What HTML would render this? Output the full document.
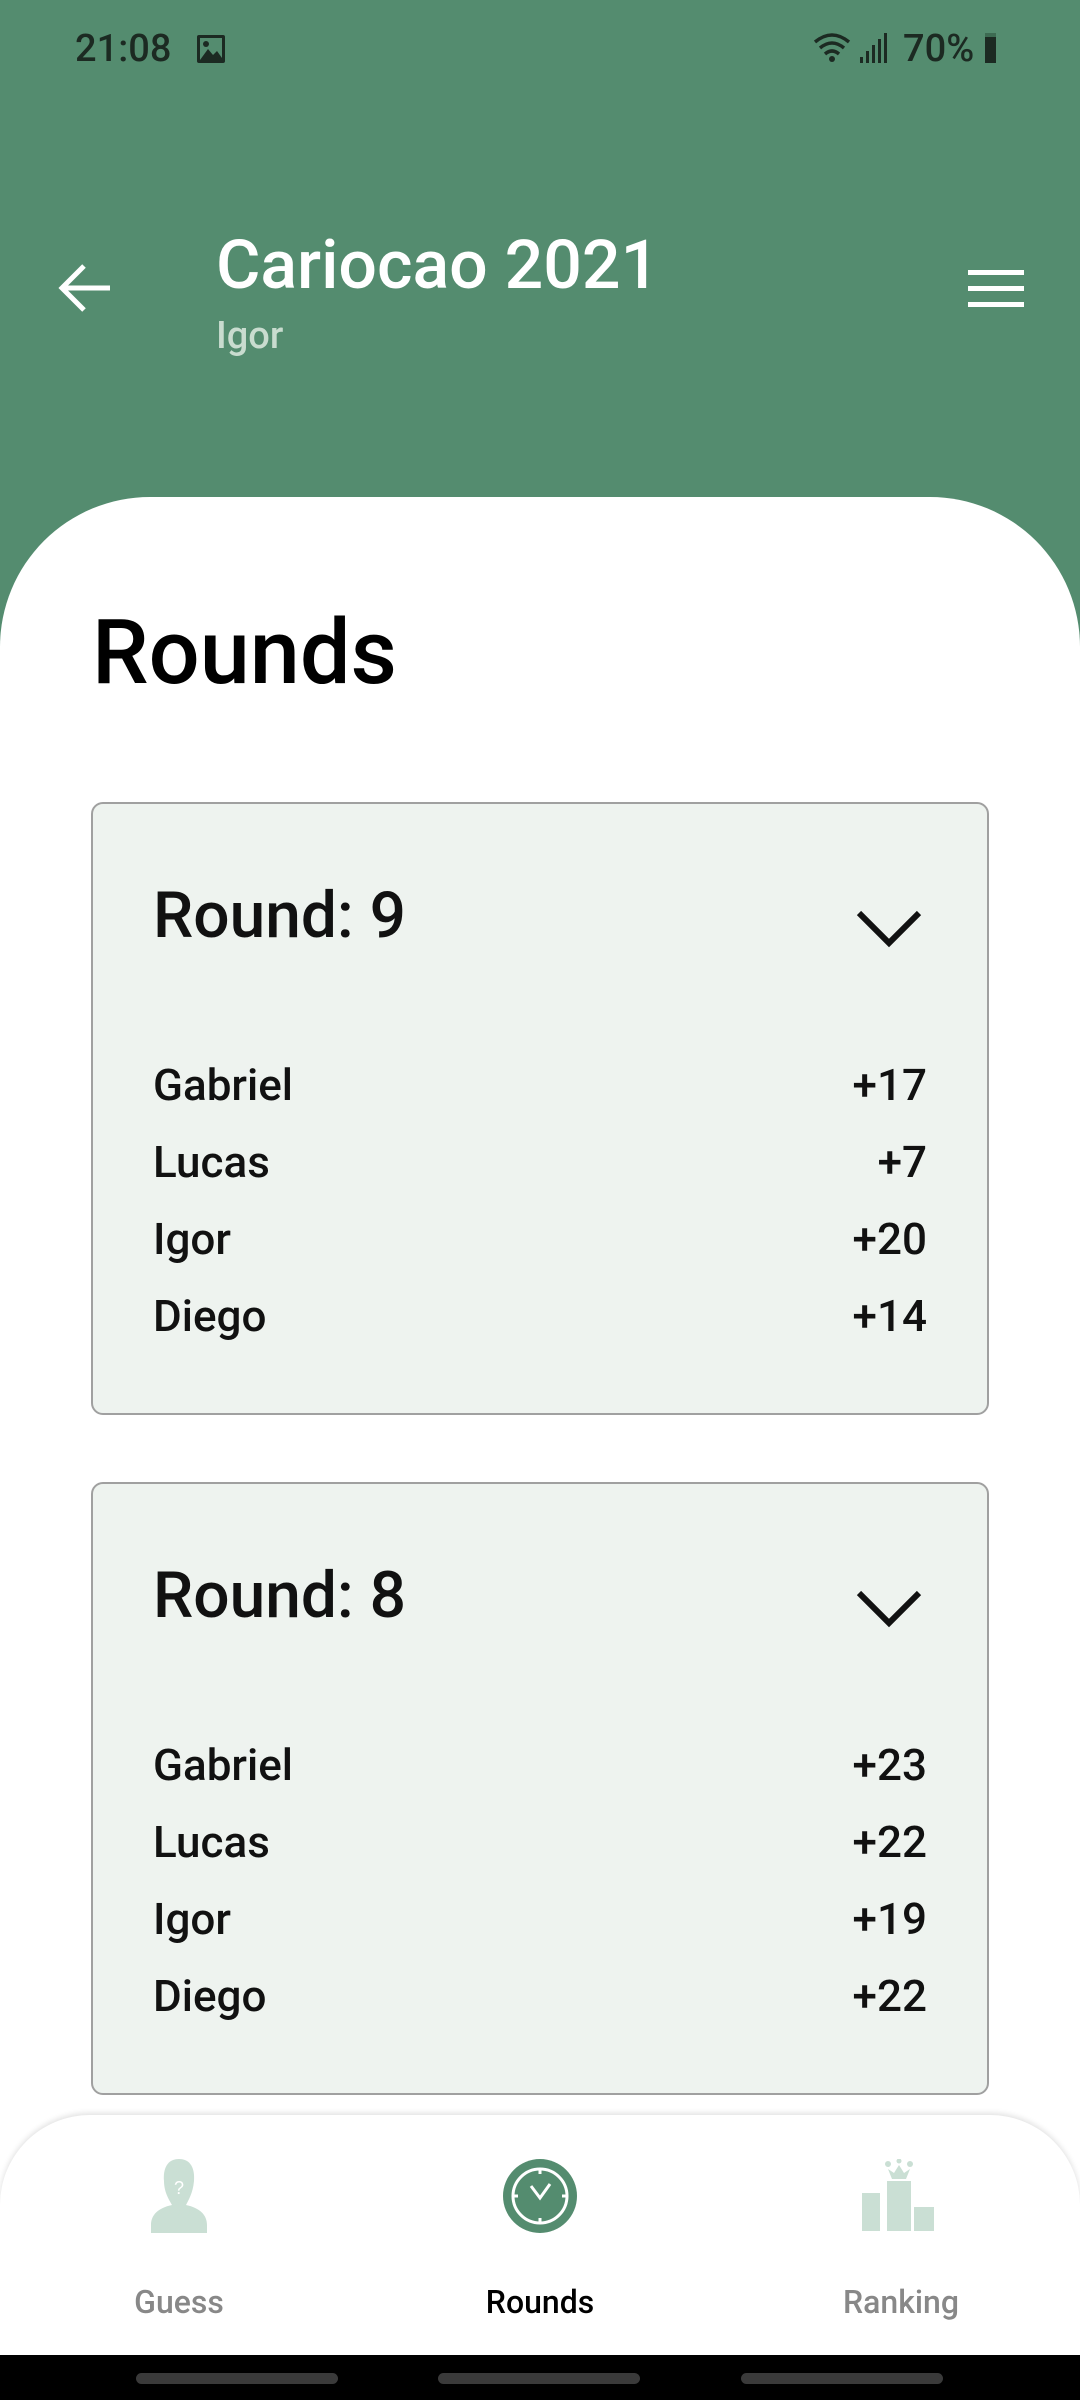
<!DOCTYPE html>
<html><head><meta charset="utf-8"><style>
*{margin:0;padding:0;box-sizing:border-box}
body{width:1080px;height:2400px;position:relative;overflow:hidden;background:#548c6f;font-family:"Roboto","Liberation Sans",sans-serif}
.a{position:absolute;line-height:1;white-space:nowrap}
.sheet{position:absolute;left:0;top:497px;width:1080px;height:1903px;background:#fff;border-radius:150px 150px 0 0}
.card{position:absolute;left:91px;width:898px;height:613px;background:#eef3ef;border:2px solid #a0a0a0;border-radius:12px}
.row{position:absolute;left:60px;right:60px;font-size:44px;font-weight:500;line-height:1;color:#111;display:flex;justify-content:space-between}
.nav{position:absolute;left:0;top:2115px;width:1080px;height:240px;background:#fff;border-radius:90px 90px 0 0;box-shadow:0 -2px 6px rgba(0,0,0,.12)}
.pill{position:absolute;top:2373px;height:11px;width:202px;border-radius:6px;background:#3a3a3a}
</style></head><body>
<div class="a" style="left:75px;top:30px;font-size:38px;font-weight:500;color:#1c2a22">21:08</div>
<svg class="a" style="left:196px;top:34px" width="30" height="30" viewBox="0 0 30 30"><rect x="1" y="1" width="28" height="28" rx="2" fill="#1c2a22"/><rect x="4" y="4" width="22" height="22" fill="#548c6f"/><path d="M4 26 L12 15 L17 21 L21 17 L26 24 V26Z" fill="#1c2a22"/><circle cx="10" cy="10" r="3" fill="#1c2a22"/></svg>
<svg class="a" style="left:812px;top:30px" width="80" height="36" viewBox="0 0 80 36"><path d="M3 12 Q20 -2 37 12" stroke="#1c2a22" stroke-width="3.5" fill="none"/><path d="M8 18 Q20 8 32 18" stroke="#1c2a22" stroke-width="3.5" fill="none"/><path d="M13 24 Q20 18 27 24" stroke="#1c2a22" stroke-width="3.5" fill="none"/><circle cx="20" cy="29" r="3" fill="#1c2a22"/><rect x="48" y="27" width="3" height="6" fill="#1c2a22"/><rect x="54" y="21" width="3" height="12" fill="#1c2a22"/><rect x="60" y="15" width="3" height="18" fill="#1c2a22"/><rect x="66" y="9" width="3" height="24" fill="#1c2a22"/><rect x="72" y="3" width="3" height="30" fill="#1c2a22"/></svg>
<div class="a" style="left:903px;top:30px;font-size:38px;font-weight:500;color:#1c2a22">70%</div>
<div class="a" style="left:985px;top:33px;width:11px;height:30px;background:#1c2a22;border-top:4px solid #3d6b52"></div>
<svg class="a" style="left:58px;top:263px" width="54" height="50" viewBox="0 0 54 50"><path d="M4 25 H52 M26 3 L4 25 L26 47" stroke="#fff" stroke-width="5" fill="none"/></svg>
<div class="a" style="left:216px;top:231px;font-size:68px;font-weight:500;color:#fff">Cariocao 2021</div>
<div class="a" style="left:216px;top:317px;font-size:38px;font-weight:500;color:#c9dccf">Igor</div>
<div class="a" style="left:968px;top:270px;width:56px;height:5px;background:#fff"></div>
<div class="a" style="left:968px;top:286px;width:56px;height:5px;background:#fff"></div>
<div class="a" style="left:968px;top:302px;width:56px;height:5px;background:#fff"></div>
<div class="sheet"></div>
<div class="a" style="left:92px;top:608px;font-size:90px;font-weight:500;color:#000">Rounds</div>

<div class="card" style="top:802px">
<div class="a" style="left:60px;top:80px;font-size:64px;font-weight:500;color:#111">Round: 9</div>
<svg class="a" style="left:763px;top:105px" width="66" height="40" viewBox="0 0 66 40"><path d="M3 4 L33 34 L63 4" stroke="#111" stroke-width="6" fill="none"/></svg>
<div class="row" style="top:259px"><span>Gabriel</span><span>+17</span></div>
<div class="row" style="top:336px"><span>Lucas</span><span>+7</span></div>
<div class="row" style="top:413px"><span>Igor</span><span>+20</span></div>
<div class="row" style="top:490px"><span>Diego</span><span>+14</span></div>
</div>
<div class="card" style="top:1482px">
<div class="a" style="left:60px;top:80px;font-size:64px;font-weight:500;color:#111">Round: 8</div>
<svg class="a" style="left:763px;top:105px" width="66" height="40" viewBox="0 0 66 40"><path d="M3 4 L33 34 L63 4" stroke="#111" stroke-width="6" fill="none"/></svg>
<div class="row" style="top:259px"><span>Gabriel</span><span>+23</span></div>
<div class="row" style="top:336px"><span>Lucas</span><span>+22</span></div>
<div class="row" style="top:413px"><span>Igor</span><span>+19</span></div>
<div class="row" style="top:490px"><span>Diego</span><span>+22</span></div>
</div>

<div class="nav"></div>
<svg class="a" style="left:148px;top:2159px" width="62" height="74" viewBox="0 0 62 74"><path d="M31 0 C43 0 47 10 46 22 C45 34 40 42 38 46 C52 49 59 56 59 66 V74 H3 V66 C3 56 10 49 24 46 C22 42 16 34 16 22 C15 10 19 0 31 0Z" fill="#cadfd4"/><text x="31" y="35" font-size="18" text-anchor="middle" fill="#fff" font-family="Liberation Sans">?</text></svg>
<svg class="a" style="left:502px;top:2158px" width="76" height="76" viewBox="0 0 76 76"><circle cx="38" cy="38" r="37" fill="#548c6f"/><circle cx="38" cy="38" r="27" fill="none" stroke="#fff" stroke-width="3"/><path d="M29 28 L38 40 L48 26" stroke="#fff" stroke-width="3" fill="none"/><path d="M38 11V16M38 60V65M11 38H16M60 38H65" stroke="#fff" stroke-width="3"/></svg>
<svg class="a" style="left:862px;top:2159px" width="74" height="72" viewBox="0 0 74 72"><rect x="0" y="34" width="18" height="38" fill="#cadfd4"/><rect x="25" y="22" width="24" height="50" fill="#cadfd4"/><rect x="52" y="48" width="20" height="24" fill="#cadfd4"/><path d="M26 10 L30 20 H44 L48 10 L42 14 L37 6 L32 14Z" fill="#cadfd4"/><circle cx="26" cy="5" r="3" fill="#cadfd4"/><circle cx="37" cy="2" r="2.5" fill="#cadfd4"/><circle cx="48" cy="5" r="3" fill="#cadfd4"/></svg>
<div class="a" style="left:79px;width:200px;text-align:center;top:2286px;font-size:32px;font-weight:500;color:#888">Guess</div>
<div class="a" style="left:440px;width:200px;text-align:center;top:2286px;font-size:32px;font-weight:500;color:#000">Rounds</div>
<div class="a" style="left:801px;width:200px;text-align:center;top:2286px;font-size:32px;font-weight:500;color:#888">Ranking</div>
<div class="a" style="left:0;top:2355px;width:1080px;height:45px;background:#000"></div>
<div class="pill" style="left:136px"></div>
<div class="pill" style="left:438px"></div>
<div class="pill" style="left:741px"></div>
</body></html>
